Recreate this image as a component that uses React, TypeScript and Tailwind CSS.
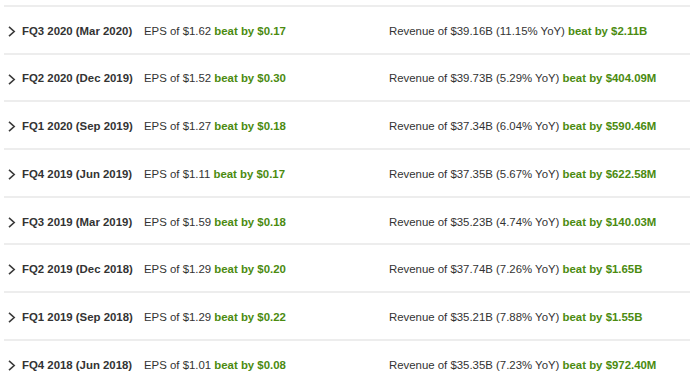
interface Quarter {
  label: string;
  eps: string;
  epsBeat: string;
  revenue: string;
  yoy: string;
  revBeat: string;
}

const quarters: Quarter[] = [
  { label: "FQ3 2020 (Mar 2020)", eps: "$1.62", epsBeat: "$0.17", revenue: "$39.16B", yoy: "11.15%", revBeat: "$2.11B" },
  { label: "FQ2 2020 (Dec 2019)", eps: "$1.52", epsBeat: "$0.30", revenue: "$39.73B", yoy: "5.29%", revBeat: "$404.09M" },
  { label: "FQ1 2020 (Sep 2019)", eps: "$1.27", epsBeat: "$0.18", revenue: "$37.34B", yoy: "6.04%", revBeat: "$590.46M" },
  { label: "FQ4 2019 (Jun 2019)", eps: "$1.11", epsBeat: "$0.17", revenue: "$37.35B", yoy: "5.67%", revBeat: "$622.58M" },
  { label: "FQ3 2019 (Mar 2019)", eps: "$1.59", epsBeat: "$0.18", revenue: "$35.23B", yoy: "4.74%", revBeat: "$140.03M" },
  { label: "FQ2 2019 (Dec 2018)", eps: "$1.29", epsBeat: "$0.20", revenue: "$37.74B", yoy: "7.26%", revBeat: "$1.65B" },
  { label: "FQ1 2019 (Sep 2018)", eps: "$1.29", epsBeat: "$0.22", revenue: "$35.21B", yoy: "7.88%", revBeat: "$1.55B" },
  { label: "FQ4 2018 (Jun 2018)", eps: "$1.01", epsBeat: "$0.08", revenue: "$35.35B", yoy: "7.23%", revBeat: "$972.40M" },
];

function Chevron() {
  return (
    <svg width="8" height="11" viewBox="0 0 8 11" className="ml-[4px] mr-[6px] shrink-0">
      <polyline points="1,0.8 6.2,5.5 1,10.2" fill="none" stroke="#3a3a3a" strokeWidth="1.6" />
    </svg>
  );
}

export default function App() {
  return (
    <div
      className="w-[690px] h-[385px] overflow-hidden bg-white pt-[5px] pl-[4px] text-[11.4px] text-[#333]"
      style={{ fontFamily: '"Liberation Sans", Arial, sans-serif' }}
    >
      {quarters.map((q) => (
        <div
          key={q.label}
          className="h-[47.7px] border-t-2 border-[#ededed] flex items-center pt-[3px]"
        >
          {/* chevron + quarter */}
          <div className="w-[140px] flex items-center">
            <Chevron />
            <span className="font-bold">{q.label}</span>
          </div>
          {/* EPS */}
          <div className="w-[245px]">
            EPS of {q.eps} <span className="font-bold text-[#4b8b10]">beat by {q.epsBeat}</span>
          </div>
          {/* Revenue */}
          <div>
            Revenue of {q.revenue} ({q.yoy} YoY){" "}
            <span className="font-bold text-[#4b8b10]">beat by {q.revBeat}</span>
          </div>
        </div>
      ))}
    </div>
  );
}
